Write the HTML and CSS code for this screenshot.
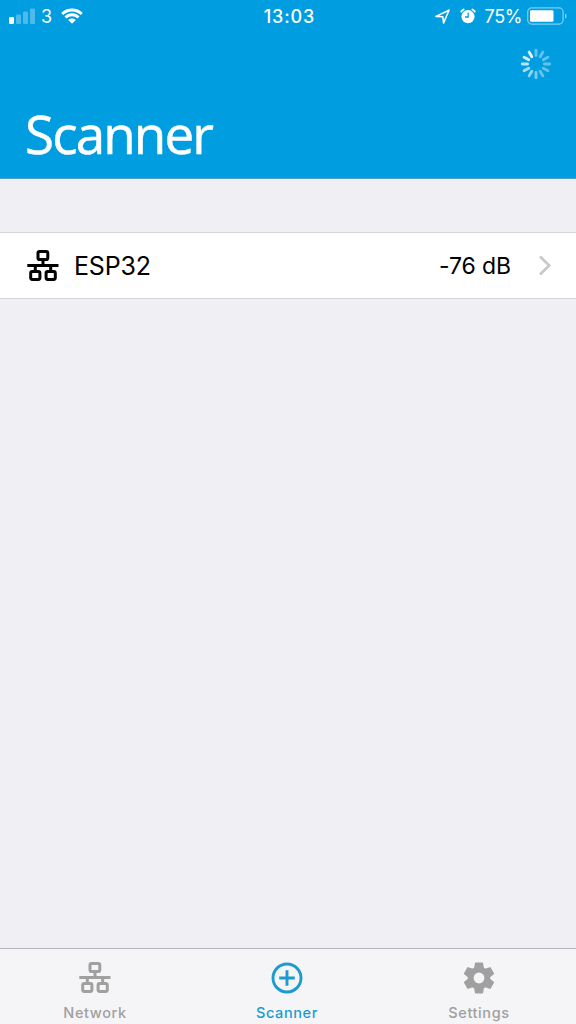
FILE: index.html
```html
<!DOCTYPE html>
<html lang="en">
<head>
    <meta charset="UTF-8">
    <meta name="viewport" content="width=device-width, initial-scale=1.0">
    <title>Scanner</title>
    <link rel="stylesheet" href="styles.css">
</head>
<body>
    <svg class="sprite" width="0" height="0">
        <symbol id="network" viewBox="0 0 32 32">
            <g fill="none" stroke="currentColor" stroke-width="3">
                <rect x="11" y="1.5" width="9.8" height="8" rx="1.6"/>
                <rect x="3.7" y="21.6" width="9.2" height="7.8" rx="1.6"/>
                <rect x="19.1" y="21.6" width="9.2" height="7.8" rx="1.6"/>
                <path d="M.3 15.6h31.2M16 10v5.6M8.3 15.6v6M23.7 15.6v6"/>
            </g>
        </symbol>
    </svg>
    <div class="app">
        <header class="header">
            <div class="status-bar">
                <div class="status-left">
                    <svg class="signal" width="26" height="16" viewBox="0 0 26 16">
                        <rect x="0" y="9" width="5" height="7" rx="1.2" fill="#fff"/>
                        <g fill="#fff" opacity=".3">
                            <rect x="7" y="6.5" width="5" height="9.5" rx="1.2"/>
                            <rect x="14" y="3.5" width="5" height="12.5" rx="1.2"/>
                            <rect x="21" y="0.5" width="5" height="15.5" rx="1.2"/>
                        </g>
                    </svg>
                    <span class="carrier">3</span>
                    <svg class="wifi" width="22" height="16" viewBox="0 0 22 16">
                        <g fill="none" stroke="#fff" stroke-width="2.9">
                            <path d="M1.2 6a14 14 0 0 1 19.6 0"/>
                            <path d="M4.5 9.5a9.2 9.2 0 0 1 13 0"/>
                        </g>
                        <path d="M11 15.8l-3.8-3.9a5.6 5.6 0 0 1 7.6 0z" fill="#fff"/>
                    </svg>
                </div>
                <span class="clock">13:03</span>
                <div class="status-right">
                    <svg class="location" width="15" height="15" viewBox="0 0 15 15">
                        <path d="M1 7.4L14 1.2L8.6 14L7.8 7.8z" fill="none" stroke="#fff" stroke-width="1.6" stroke-linejoin="round"/>
                    </svg>
                    <svg class="alarm" width="16" height="16" viewBox="0 0 16 16">
                        <circle cx="8" cy="8.6" r="6.6" fill="#fff"/>
                        <path d="M1.2 3.6A9 9 0 0 1 3.6 1.5M12.4 1.5a9 9 0 0 1 2.4 2.1" fill="none" stroke="#fff" stroke-width="1.8" stroke-linecap="round"/>
                        <path d="M8.2 4.4V9H5" fill="none" stroke="#009de1" stroke-width="1.3"/>
                    </svg>
                    <span class="percent">75%</span>
                    <svg class="battery" width="41" height="18" viewBox="0 0 41 18">
                        <rect x=".7" y=".9" width="35.4" height="16.2" rx="4" fill="none" stroke="#fff" stroke-width="1.2" opacity=".5"/>
                        <rect x="3" y="3.2" width="23.5" height="11.6" rx="1.2" fill="#fff"/>
                        <path d="M38 6.2a3.2 3.2 0 0 1 0 5.6z" fill="#fff" opacity=".5"/>
                    </svg>
                </div>
            </div>
            <div class="nav-row">
                <svg class="spinner" width="32" height="32" viewBox="-16 -16 32 32">
                    <g stroke="#fff" stroke-width="2.9" stroke-linecap="round">
                        <path d="M0-8.4v-5.3" opacity=".38"/>
                        <path d="M0-8.4v-5.3" opacity=".38" transform="rotate(30)"/>
                        <path d="M0-8.4v-5.3" opacity=".38" transform="rotate(60)"/>
                        <path d="M0-8.4v-5.3" opacity=".38" transform="rotate(90)"/>
                        <path d="M0-8.4v-5.3" opacity=".38" transform="rotate(120)"/>
                        <path d="M0-8.4v-5.3" opacity=".4" transform="rotate(150)"/>
                        <path d="M0-8.4v-5.3" opacity=".48" transform="rotate(180)"/>
                        <path d="M0-8.4v-5.3" opacity=".56" transform="rotate(210)"/>
                        <path d="M0-8.4v-5.3" opacity=".65" transform="rotate(240)"/>
                        <path d="M0-8.4v-5.3" opacity=".73" transform="rotate(270)"/>
                        <path d="M0-8.4v-5.3" opacity=".82" transform="rotate(300)"/>
                        <path d="M0-8.4v-5.3" opacity=".9" transform="rotate(330)"/>
                    </g>
                </svg>
            </div>
            <h1>Scanner</h1>
        </header>

        <main class="content">
            <div class="device">
                <svg class="device-icon" width="32" height="32"><use href="#network"/></svg>
                <span class="device-name">ESP32</span>
                <span class="device-signal">-76 dB</span>
                <svg class="chevron" width="14" height="22" viewBox="0 0 14 22">
                    <path d="M2 1.5l9.2 9L2 19.5" fill="none" stroke="#c7c7cc" stroke-width="2.6"/>
                </svg>
            </div>
        </main>

        <nav class="tab-bar">
            <a class="tab">
                <svg width="32" height="32"><use href="#network"/></svg>
                <span>Network</span>
            </a>
            <a class="tab active">
                <svg width="32" height="32" viewBox="0 0 32 32">
                    <g fill="none" stroke="currentColor" stroke-width="2.9">
                        <circle cx="16" cy="16" r="14"/>
                        <path d="M16 8.2v15.6M8.2 16h15.6"/>
                    </g>
                </svg>
                <span>Scanner</span>
            </a>
            <a class="tab">
                <svg width="32" height="32" viewBox="-16 -16 32 32">
                    <g fill="currentColor">
                        <path id="teeth" d="M-3.9-15.4h7.8l1 5.4v20l-1 5.4h-7.8l-1-5.4v-20z"/>
                        <use href="#teeth" transform="rotate(60)"/>
                        <use href="#teeth" transform="rotate(120)"/>
                        <circle r="11.2"/>
                    </g>
                    <circle r="5.4" fill="#f5f5f7"/>
                </svg>
                <span>Settings</span>
            </a>
        </nav>
    </div>
</body>
</html>
```
FILE: styles.css
```css
body {
    margin: 0;
    font-family: Inter, "Liberation Sans", sans-serif;
    background: #efeff4;
}
.sprite {
    display: block;
}
.app {
    display: flex;
    flex-direction: column;
    height: 100vh;
    overflow: hidden;
}

/* Header */
.header {
    box-sizing: border-box;
    height: 179px;
    background: #009de1;
    border-bottom: 1px solid #4d9fc9;
    color: #fff;
}
.status-bar {
    display: grid;
    grid-template-columns: 1fr auto 1fr;
    align-items: center;
    height: 32px;
    padding: 0 8px 0 10px;
    font-size: 18px;
}
.status-left,
.status-right {
    display: flex;
    align-items: center;
}
.status-left {
    margin-left: -1px;
}
.status-right {
    justify-content: flex-end;
}
.carrier {
    margin: 0 9px 0 6px;
}
.clock {
    padding-left: 1px;
    font-weight: 500;
    letter-spacing: 0.9px;
}
.location {
    margin-right: 10px;
}
.alarm {
    margin-right: 9px;
}
.percent {
    margin-right: 5px;
    letter-spacing: -0.4px;
}
.nav-row {
    display: flex;
    justify-content: flex-end;
    padding: 16px 24px 0 0;
}
h1 {
    margin: 16px 0 0 25px;
    font-family: "Open Sans", "Noto Sans", sans-serif;
    font-size: 53px;
    font-weight: 500;
    line-height: 75px;
    letter-spacing: -1.9px;
    -webkit-text-stroke: 0.5px #fff;
}

/* Device list */
.content {
    flex: 1;
    padding-top: 53px;
}
.device {
    display: flex;
    align-items: center;
    height: 65px;
    padding: 0 24px 0 27px;
    background: #fff;
    border-top: 1px solid #d5d5d9;
    border-bottom: 1px solid #d5d5d9;
    color: #000;
}
.device-name {
    flex: 1;
    margin-left: 15px;
    font-size: 25px;
    letter-spacing: -0.2px;
}
.device-signal {
    margin-right: 27px;
    font-size: 23px;
    letter-spacing: -0.1px;
}

/* Tab bar */
.tab-bar {
    box-sizing: border-box;
    display: grid;
    grid-template-columns: repeat(3, 1fr);
    width: 100%;
    height: 76px;
    padding-top: 13px;
    background: #f5f5f7;
    border-top: 1px solid #b4b4bb;
}
.tab {
    display: flex;
    flex-direction: column;
    align-items: center;
    padding-right: 2px;
    color: #a0a0a1;
    font-size: 14.5px;
    font-weight: 500;
    line-height: 18px;
    letter-spacing: 0.6px;
}
.tab span {
    margin-top: 10px;
}
.tab.active {
    color: #1d9bd1;
}
```
